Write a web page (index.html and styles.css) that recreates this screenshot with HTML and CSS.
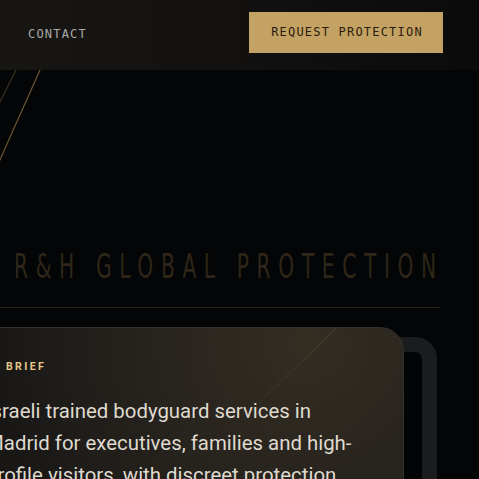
FILE: index.html
```html
<!DOCTYPE html>
<html lang="en">
  <head>
    <meta charset="UTF-8" />
    <meta name="viewport" content="width=device-width, initial-scale=1.0" />
    <title>R&amp;H Global Protection</title>
    <link rel="stylesheet" href="styles.css">
  </head>
  <body>
    <header class="site-header">
      <nav class="site-nav">
        <a href="#contact">CONTACT</a>
      </nav>
      <a class="cta" href="#request">REQUEST PROTECTION</a>
    </header>

    <svg class="deco-lines" width="60" height="120" viewBox="0 0 60 120">
      <line x1="16" y1="0" x2="-1" y2="34" stroke="#3f3422" stroke-width="1.2" />
      <line x1="40" y1="0" x2="-1" y2="92" stroke="#6b5632" stroke-width="1.2" />
    </svg>

    <main class="hero">
      <h1 class="brand-title"><span>R&amp;H GLOBAL PROTECTION</span></h1>

      <div class="card-stack">
        <div class="card-back"></div>
        <section class="brief-card">
          <span class="brief-label">BRIEF</span>
          <p class="brief-text">
            Israeli trained bodyguard services in Madrid for executives, families and high-profile visitors, with discreet protection
            planned around your schedule.
          </p>
        </section>
      </div>
    </main>
  </body>
</html>
```

FILE: styles.css
```css
/* styles.css */
body {
  margin: 0;
  background-color: #040506;
  font-family: Roboto, "Liberation Sans", sans-serif;
  overflow: hidden;
  height: 479px;
}

.site-header {
  display: flex;
  align-items: center;
  height: 64px;
  padding: 0 36px 6px 28px;
  background: linear-gradient(90deg, #181613 0%, #121110 50%, #0b0b0c 100%);
  position: relative;
  z-index: 2;
}

.site-nav a,
.cta {
  font-family: "DejaVu Sans Mono", "Liberation Mono", monospace;
  font-size: 12px;
  letter-spacing: 1.2px;
  text-decoration: none;
}

.site-nav a {
  color: #a9a9a9;
}

.cta {
  margin-left: auto;
  display: flex;
  align-items: center;
  justify-content: center;
  width: 194px;
  height: 41px;
  box-sizing: border-box;
  padding-left: 2px;
  background-color: #c4a263;
  color: #2a1d0e;
}

.deco-lines {
  position: absolute;
  top: 70px;
  left: 0;
  z-index: 1;
}

.hero {
  margin: 0 39px 0 -40px;
}

.brand-title {
  margin: 180px 0 0;
  padding: 0 0 23px 54px;
  border-bottom: 1px solid #2a2318;
  font-family: "DejaVu Sans Condensed", "Liberation Sans", sans-serif;
  font-weight: normal;
  font-size: 33px;
  line-height: 34px;
  color: #2f2619;
  white-space: nowrap;
}

.brand-title span {
  display: inline-block;
  letter-spacing: 11.25px;
  transform: scaleX(0.68);
  transform-origin: left center;
}

.card-stack {
  position: relative;
  margin-top: 19px;
  margin-right: 36px;
}

.card-back {
  position: absolute;
  top: 10px;
  right: -33px;
  width: 120px;
  height: 400px;
  border: 15px solid #1b1c1e;
  border-radius: 22px;
  background-color: #030405;
}

.brief-card {
  position: relative;
  overflow: hidden;
  height: 300px;
  padding: 32px 44px 0 25px;
  border: 1px solid #34302b;
  border-radius: 24px;
  background:
    radial-gradient(circle at 78% 4%, #342d22 0%, #28241e 30%, transparent 65%),
    linear-gradient(90deg, #181716 0%, #1d1b19 60%, #25221d 100%);
}

.brief-card::before {
  content: "";
  position: absolute;
  top: 0;
  left: 375px;
  width: 1px;
  height: 160px;
  background: linear-gradient(180deg, rgba(255, 235, 190, 0.1), rgba(255, 235, 190, 0));
  transform: rotate(46deg);
  transform-origin: top center;
}

.brief-label {
  display: block;
  padding-left: 20px;
  font-size: 10.5px;
  font-weight: bold;
  line-height: 14px;
  letter-spacing: 2.4px;
  color: #e8c98a;
}

.brief-text {
  position: relative;
  margin: 21px 0 0;
  font-size: 20.4px;
  line-height: 32px;
  color: #dfd9ce;
}
```
